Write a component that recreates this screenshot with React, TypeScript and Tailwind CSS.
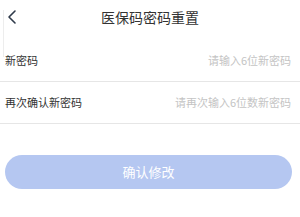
import { ChevronLeft } from 'lucide-react'

const FONT = { fontFamily: '"Noto Sans CJK SC", "Noto Sans", sans-serif' }

function Row({ label, placeholder }: { label: string; placeholder: string }) {
  return (
    <div className="flex h-[42px] items-center justify-between border-b border-[#e6e6e6] pl-[5px] pr-[9px]">
      <span className="text-[11px] text-[#333]">{label}</span>
      <input
        className="w-[150px] bg-transparent text-right text-[11px] text-[#333] outline-none placeholder:text-[#c4c4c4]"
        placeholder={placeholder}
        style={FONT}
      />
    </div>
  )
}

export default function App() {
  return (
    <div className="relative h-[217px] w-[300px] bg-white" style={FONT}>
      {/* faint edge line */}
      <div className="absolute left-[3px] top-[10px] h-[47px] w-px bg-[#ededed]" />

      {/* Header */}
      <div className="relative flex h-[34px] items-center justify-center">
        <ChevronLeft className="absolute left-0 top-[5px] text-[#2f3a4a]" size={24} strokeWidth={1.6} />
        <span className="text-[14px] text-[#333]">医保码密码重置</span>
      </div>

      {/* Form */}
      <div className="mt-[6px]">
        <Row label="新密码" placeholder="请输入6位新密码" />
        <Row label="再次确认新密码" placeholder="请再次输入6位数新密码" />
      </div>

      {/* Submit */}
      <div className="px-[5px] pt-[31px]">
        <button className="flex h-[34px] w-[287px] items-center justify-center rounded-full bg-[#b5c7f1] text-[13px] text-white">
          确认修改
        </button>
      </div>
    </div>
  )
}
